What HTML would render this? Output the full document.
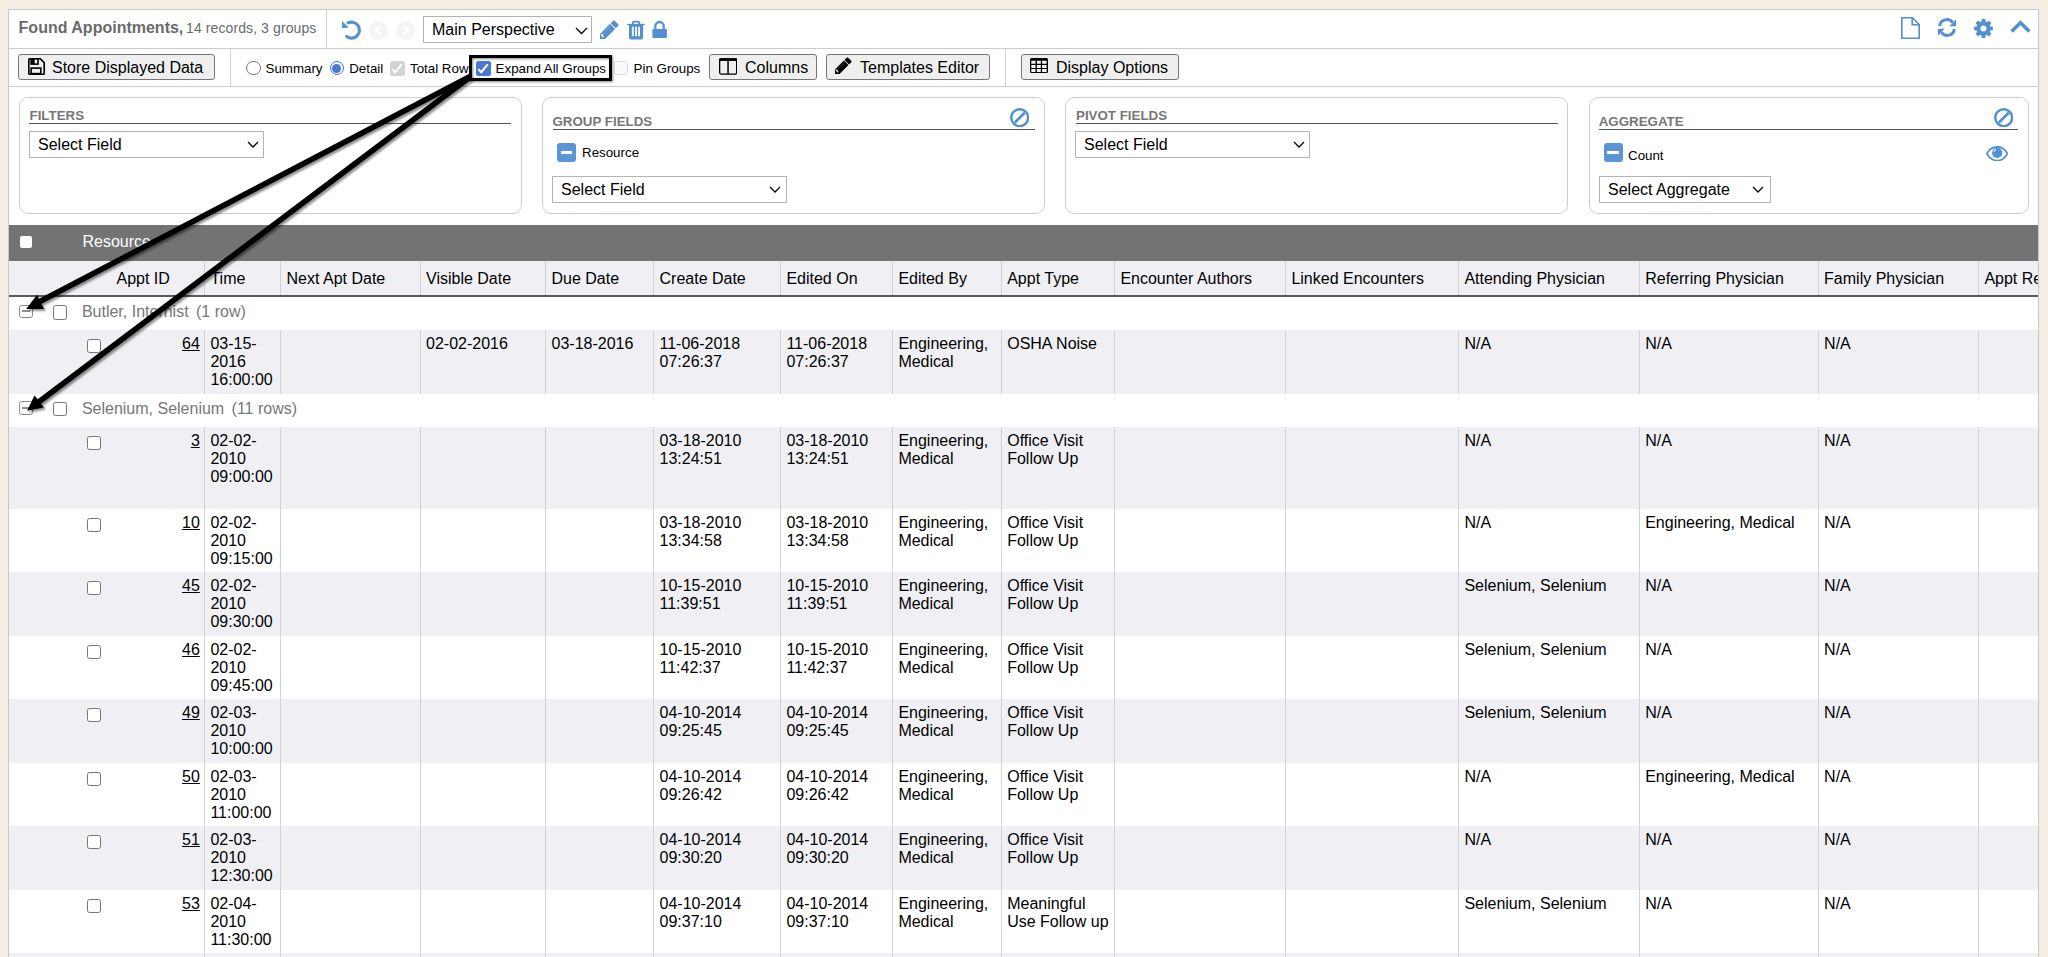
<!DOCTYPE html><html><head><meta charset="utf-8"><style>
*{box-sizing:border-box;margin:0;padding:0}
html,body{width:2048px;height:957px;overflow:hidden;background:#f4ede1;font-family:"Liberation Sans",sans-serif;color:#000}
.a{position:absolute}
.wrap{position:absolute;left:8px;top:9px;width:2031px;height:960px;background:#fff;border:1px solid #c8c8c8}
.hl{position:absolute;height:1px;background:#cfcfcf}
.vl{position:absolute;width:1px;background:#d2d2d2}
.t16{font-size:16px;line-height:18px;white-space:nowrap}
.t13{font-size:13.333px;line-height:15px;white-space:nowrap}
.btn{position:absolute;height:26px;background:#efefef;border:1px solid #767676;border-radius:3px}
.btn span{position:absolute;font-size:16px;line-height:18px;top:4px;white-space:nowrap}
.btn svg{position:absolute}
.sel{position:absolute;background:#fff;border:1px solid #b4b4b4}
.sel span{position:absolute;left:8px;font-size:16px;line-height:18px;white-space:nowrap}
.sel svg{position:absolute}
.panel{position:absolute;top:97px;height:117px;border:1px solid #cdcdcd;border-radius:9px;background:#fff}
.ptitle{position:absolute;font-weight:bold;font-size:13.333px;line-height:15px;color:#777;white-space:nowrap}
.pline{position:absolute;height:1px;background:#555}
.cb{position:absolute;width:13.5px;height:13.5px;border:1px solid #777;border-radius:2.5px;background:#fff}
.row{position:absolute;left:9px;width:2029px}
.cell{position:absolute;font-size:16px;line-height:18px;white-space:nowrap}
</style></head><body><div class="wrap"></div><div class="a" style="left:18.6px;top:18.5px;font-size:16px;line-height:18px;color:#6a6a6a;white-space:nowrap"><b>Found Appointments,</b></div><div class="a" style="left:186px;top:20px;font-size:14px;line-height:16px;color:#6a6a6a;letter-spacing:0.1px;white-space:nowrap">14 records, 3 groups</div><div class="vl" style="left:326px;top:10px;height:38px;background:#d0d0d0"></div><div class="hl" style="left:9px;top:48px;width:2029px;background:#cccccc"></div><svg class="a" style="left:341px;top:20px" width="21" height="21" viewBox="0 0 21 21"><path d="M5.91 3.55 A8 8 0 1 1 4.65 15.56" fill="none" stroke="#5290d2" stroke-width="3.1"/><path d="M1.0 0.9 L1.0 8.1 L7.9 7.7 Z" fill="#5290d2"/></svg><div class="a" style="left:368.8px;top:20.5px;width:19px;height:19px;border-radius:50%;background:#f5f5f5"></div><svg class="a" style="left:368.8px;top:20.5px" width="19" height="19" viewBox="0 0 19 19"><path d="M11.7 5 L7.2 9.5 L11.7 14" fill="none" stroke="#fff" stroke-width="2.6"/></svg><div class="a" style="left:395.7px;top:20.5px;width:19px;height:19px;border-radius:50%;background:#f5f5f5"></div><svg class="a" style="left:395.7px;top:20.5px" width="19" height="19" viewBox="0 0 19 19"><path d="M7.3 5 L11.8 9.5 L7.3 14" fill="none" stroke="#fff" stroke-width="2.6"/></svg><div class="sel" style="left:423px;top:16px;width:169px;height:27px"><span style="top:4px">Main Perspective</span></div><svg class="a" style="left:575px;top:27px" width="13" height="7.5" viewBox="-1 -1 13 7.5"><path d="M0 0 L5.5 5.5 L11 0" fill="none" stroke="#000" stroke-width="1.25"/></svg><svg class="a" style="left:600.2px;top:39.3px;overflow:visible" width="1" height="1" viewBox="0 0 1 1"><g transform="scale(1) rotate(-45)"><path d="M0 0 L3.6 -3.6 L17.8 -3.6 L17.8 3.6 L3.6 3.6 Z" fill="#5290d2"/><path d="M18.7 -3.6 H22.2 Q23.4 -3.6 23.4 -2.4 V2.4 Q23.4 3.6 22.2 3.6 H18.7 Z" fill="#5290d2"/><path d="M7.5 -1.8 H16.8" stroke="#fff" stroke-width="0.55" stroke-dasharray="0.9 0.5" opacity="0.8"/><path d="M3.2 -2.3 L5.4 -2.3 L5.4 -0.6 L4.6 -0.6 L4.6 1.3 L3.2 1.3 Z" fill="#fff"/></g></svg><svg class="a" style="left:627px;top:20px" width="18" height="20" viewBox="0 0 18 20"><path d="M0.1 3.8 H17.7 V5.1 H0.1 Z" fill="#5290d2"/><path d="M5 4 V2.6 Q5 0.7 6.9 0.7 H11.1 Q13 0.7 13 2.6 V4 H11.2 V2.5 H6.8 V4 Z" fill="#5290d2"/><path d="M2 4.5 H16.1 V17.5 Q16.1 19.5 14.1 19.5 H4 Q2 19.5 2 17.5 Z" fill="#5290d2"/><path d="M4.9 6.7 H6.7 V16.2 H4.9 Z M8.1 6.7 H9.9 V16.2 H8.1 Z M11.1 6.7 H12.9 V16.2 H11.1 Z" fill="#fff"/></svg><svg class="a" style="left:652px;top:20px" width="15" height="18.5" viewBox="0 0 15 18.5"><path d="M3.3 10 V6.2 A4.2 4.2 0 0 1 11.7 6.2 V10" fill="none" stroke="#5290d2" stroke-width="2.3"/><rect x="0.4" y="9.1" width="14.5" height="8.8" rx="0.9" fill="#5290d2"/></svg><svg class="a" style="left:1901px;top:17px" width="19" height="22" viewBox="0 0 19 22"><path d="M0.8 0.8 H11.5 L18.2 7.5 V21.2 H0.8 Z" fill="none" stroke="#5290d2" stroke-width="1.6"/><path d="M11.2 0.8 V7.8 H18.2" fill="none" stroke="#5290d2" stroke-width="1.6"/></svg><svg class="a" style="left:1937px;top:18px" width="20" height="19" viewBox="0 0 20 19"><path d="M2.6 8 A7.2 7.2 0 0 1 15.6 4.6" fill="none" stroke="#5290d2" stroke-width="3"/><path d="M19 1.5 V8.2 H12.3 Z" fill="#5290d2"/><path d="M17.4 11 A7.2 7.2 0 0 1 4.4 14.4" fill="none" stroke="#5290d2" stroke-width="3"/><path d="M1 17.5 V10.8 H7.7 Z" fill="#5290d2"/></svg><svg class="a" style="left:1974px;top:18.5px" width="19" height="19" viewBox="0 0 19 19"><path fill-rule="evenodd" d="M16.30 7.47 L18.92 7.63 L18.92 11.37 L16.30 11.53 L15.75 12.87 L17.48 14.83 L14.83 17.48 L12.87 15.75 L11.53 16.30 L11.37 18.92 L7.63 18.92 L7.47 16.30 L6.13 15.75 L4.17 17.48 L1.52 14.83 L3.25 12.87 L2.70 11.53 L0.08 11.37 L0.08 7.63 L2.70 7.47 L3.25 6.13 L1.52 4.17 L4.17 1.52 L6.13 3.25 L7.47 2.70 L7.63 0.08 L11.37 0.08 L11.53 2.70 L12.87 3.25 L14.83 1.52 L17.48 4.17 L15.75 6.13 Z M12.5 9.5 A3.0 3.0 0 1 0 6.5 9.5 A3.0 3.0 0 1 0 12.5 9.5 Z" fill="#5290d2"/></svg><svg class="a" style="left:2010px;top:20px" width="21" height="14" viewBox="0 0 21 14"><path d="M1.6 11.6 L10.5 2.7 L19.4 11.6" fill="none" stroke="#5290d2" stroke-width="3.6"/></svg><div class="hl" style="left:9px;top:86px;width:2029px;background:#cccccc"></div><div class="vl" style="left:230px;top:49px;height:37px;background:#d0d0d0"></div><div class="vl" style="left:1005px;top:49px;height:37px;background:#d0d0d0"></div><div class="btn" style="left:18px;top:54px;width:197px"><svg style="left:9px;top:3px" width="17" height="17" viewBox="0 0 17 17"><path d="M0.8 1.6 Q0.8 0.8 1.6 0.8 H12.3 L16.2 4.7 V15.4 Q16.2 16.2 15.4 16.2 H1.6 Q0.8 16.2 0.8 15.4 Z" fill="none" stroke="#000" stroke-width="1.6"/><rect x="2.3" y="0.8" width="8.5" height="6.1" fill="#000"/><rect x="6.7" y="1.6" width="2.5" height="3.7" fill="#fff"/><rect x="3.1" y="10.1" width="9.7" height="5.5" fill="none" stroke="#000" stroke-width="1.6"/></svg><span style="left:33px">Store Displayed Data</span></div><div class="a" style="left:246.1px;top:60.8px;width:14.5px;height:14.5px;border:1.2px solid #777;border-radius:50%;background:#fff"></div><div class="a t13" style="left:265.5px;top:60.5px">Summary</div><div class="a" style="left:329.7px;top:60.8px;width:14.3px;height:14.3px;border:1.4px solid #4a76d4;border-radius:50%;background:#fff"></div><div class="a" style="left:332.4px;top:63.5px;width:9px;height:9px;border-radius:50%;background:#4a76d4"></div><div class="a t13" style="left:349.2px;top:60.5px">Detail</div><div class="a" style="left:390px;top:61px;width:14.5px;height:14.5px;border-radius:2.5px;background:#d3d3d3"><svg class="a" style="left:0;top:0" width="14.5" height="14.5" viewBox="0 0 14.5 14.5"><path d="M2.3 8.2 L5.3 11.2 L11.7 3.4" fill="none" stroke="#fff" stroke-width="2.1"/></svg></div><div class="a t13" style="left:410px;top:60.5px">Total Row</div><div class="a" style="left:476px;top:61px;width:14.5px;height:14.5px;border-radius:2.5px;background:#4a76d4"><svg class="a" style="left:0;top:0" width="14.5" height="14.5" viewBox="0 0 14.5 14.5"><path d="M2.3 8.2 L5.3 11.2 L11.7 3.4" fill="none" stroke="#fff" stroke-width="2.1"/></svg></div><div class="a t13" style="left:495.6px;top:60.5px">Expand All Groups</div><div class="a" style="left:614px;top:61.3px;width:13.5px;height:13.8px;border:1px solid #dcdcdc;border-radius:2.5px;background:#fafafa"></div><div class="a t13" style="left:633.6px;top:60.5px">Pin Groups</div><div class="btn" style="left:709px;top:54px;width:108px"><svg style="left:8.5px;top:3px" width="18.5" height="17" viewBox="0 0 18.5 17"><rect x="0.65" y="0.9" width="17" height="15.2" rx="1.6" fill="none" stroke="#000" stroke-width="1.3"/><rect x="0" y="0.3" width="18.3" height="2.6" rx="1.2" fill="#000"/><rect x="8.3" y="1" width="1.5" height="15" fill="#000"/></svg><span style="left:35px">Columns</span></div><div class="btn" style="left:826px;top:54px;width:164px"><span style="left:33px">Templates Editor</span></div><svg class="a" style="left:834.9px;top:73.8px;overflow:visible" width="1" height="1" viewBox="0 0 1 1"><g transform="scale(0.89) rotate(-45)"><path d="M0 0 L3.6 -3.6 L17.8 -3.6 L17.8 3.6 L3.6 3.6 Z" fill="#000"/><path d="M18.7 -3.6 H22.2 Q23.4 -3.6 23.4 -2.4 V2.4 Q23.4 3.6 22.2 3.6 H18.7 Z" fill="#000"/><path d="M7.5 -1.8 H16.8" stroke="#efefef" stroke-width="0.55" stroke-dasharray="0.9 0.5" opacity="0.8"/><path d="M3.2 -2.3 L5.4 -2.3 L5.4 -0.6 L4.6 -0.6 L4.6 1.3 L3.2 1.3 Z" fill="#efefef"/></g></svg><div class="btn" style="left:1021px;top:54px;width:158px"><svg style="left:8px;top:3px" width="18" height="15" viewBox="0 0 18 15"><rect x="0" y="0" width="18" height="15" rx="1.5" fill="#000"/><path d="M1.3 2.7 H5.5 V5.7 H1.3 Z M6.9 2.7 H10.8 V5.7 H6.9 Z M12.1 2.7 H16.6 V5.7 H12.1 Z M1.3 6.9 H5.5 V9.9 H1.3 Z M6.9 6.9 H10.8 V9.9 H6.9 Z M12.1 6.9 H16.6 V9.9 H12.1 Z M1.3 11 H5.5 V14 H1.3 Z M6.9 11 H10.8 V14 H6.9 Z M12.1 11 H16.6 V14 H12.1 Z" fill="#f4f4f4"/></svg><span style="left:34px">Display Options</span></div><div class="a" style="left:469px;top:55px;width:143px;height:26px;border:3px solid #000;filter:drop-shadow(1.5px 1.5px 1.2px rgba(0,0,0,0.45))"></div><div class="panel" style="left:18.5px;width:503px"></div><div class="ptitle" style="left:29.5px;top:108px">FILTERS</div><div class="pline" style="left:29px;top:123px;width:482px"></div><div class="sel" style="left:29px;top:131px;width:235px;height:27px"><span style="top:3.6px">Select Field</span></div><svg class="a" style="left:247px;top:141px" width="12" height="7" viewBox="-1 -1 12 7"><path d="M0 0 L5.0 5 L10 0" fill="none" stroke="#000" stroke-width="1.25"/></svg><div class="panel" style="left:542px;width:503px"></div><div class="ptitle" style="left:552.5px;top:114px">GROUP FIELDS</div><div class="pline" style="left:552.5px;top:129px;width:482px"></div><svg class="a" style="left:1009.9px;top:107.89999999999999px" width="19.4" height="19.4" viewBox="0 0 19.4 19.4"><circle cx="9.7" cy="9.7" r="8.45" fill="none" stroke="#5290d2" stroke-width="2.5"/><path d="M14.7 4.699999999999999 L4.699999999999999 14.7" stroke="#5290d2" stroke-width="2.7"/></svg><div class="a" style="left:557px;top:143px;width:19px;height:19px;border-radius:3px;background:#5b95d6"><div class="a" style="left:3.6px;top:7.9px;width:11.8px;height:3px;background:#fff"></div></div><div class="a t13" style="left:582px;top:145px">Resource</div><div class="sel" style="left:552px;top:176px;width:235px;height:27px"><span style="top:3.6px">Select Field</span></div><svg class="a" style="left:769px;top:185.5px" width="12" height="7" viewBox="-1 -1 12 7"><path d="M0 0 L5.0 5 L10 0" fill="none" stroke="#000" stroke-width="1.25"/></svg><div class="panel" style="left:1065px;width:503px"></div><div class="ptitle" style="left:1076px;top:108px">PIVOT FIELDS</div><div class="pline" style="left:1076px;top:123px;width:481.5px"></div><div class="sel" style="left:1075px;top:131px;width:235px;height:27px"><span style="top:3.6px">Select Field</span></div><svg class="a" style="left:1293px;top:141px" width="12" height="7" viewBox="-1 -1 12 7"><path d="M0 0 L5.0 5 L10 0" fill="none" stroke="#000" stroke-width="1.25"/></svg><div class="panel" style="left:1588.5px;width:440px"></div><div class="ptitle" style="left:1598.7px;top:114px">AGGREGATE</div><div class="pline" style="left:1598.7px;top:129px;width:419px"></div><svg class="a" style="left:1993.6px;top:107.7px" width="19.4" height="19.4" viewBox="0 0 19.4 19.4"><circle cx="9.7" cy="9.7" r="8.45" fill="none" stroke="#5290d2" stroke-width="2.5"/><path d="M14.7 4.699999999999999 L4.699999999999999 14.7" stroke="#5290d2" stroke-width="2.7"/></svg><div class="a" style="left:1603.5px;top:143.3px;width:19px;height:19px;border-radius:3px;background:#5b95d6"><div class="a" style="left:3.6px;top:7.9px;width:11.8px;height:3px;background:#fff"></div></div><div class="a t13" style="left:1628px;top:148px">Count</div><svg class="a" style="left:1985.5px;top:145.5px" width="22.5" height="15.5" viewBox="0 0 22.5 15.5"><path d="M0.9 7.6 C4 2 8 0.8 11.2 0.8 C14.4 0.8 18.4 2 21.5 7.6 C18.4 13 14.4 14.6 11.2 14.6 C8 14.6 4 13 0.9 7.6 Z" fill="none" stroke="#5290d2" stroke-width="1.7"/><circle cx="11.2" cy="6.9" r="5.1" fill="#5290d2"/><path d="M8 5.6 A3.2 3.2 0 0 1 10.2 3.5" fill="none" stroke="#fff" stroke-width="1.1"/></svg><div class="sel" style="left:1599px;top:176px;width:172px;height:27px"><span style="top:3.6px">Select Aggregate</span></div><svg class="a" style="left:1752px;top:185.5px" width="12" height="7" viewBox="-1 -1 12 7"><path d="M0 0 L5.0 5 L10 0" fill="none" stroke="#000" stroke-width="1.25"/></svg><div class="a" style="left:0;top:0;width:2038px;height:957px;overflow:hidden"><div class="a" style="left:9px;top:224.5px;width:2029px;height:36px;background:#737373"></div><div class="a" style="left:19.5px;top:236px;width:12.5px;height:12.2px;border-radius:2px;background:#fff"></div><div class="a" style="left:82.5px;top:233px;font-size:16px;line-height:18px;color:#fff">Resource</div><div class="a" style="left:9px;top:260.5px;width:2029px;height:34.5px;background:#f0f0f4"></div><div class="a" style="left:9px;top:295px;width:2029px;height:2px;background:#5a5a5a"></div><div class="vl" style="left:203.9px;top:261px;height:34px"></div><div class="vl" style="left:280.0px;top:261px;height:34px"></div><div class="vl" style="left:419.5px;top:261px;height:34px"></div><div class="vl" style="left:545.0px;top:261px;height:34px"></div><div class="vl" style="left:653.0px;top:261px;height:34px"></div><div class="vl" style="left:779.9px;top:261px;height:34px"></div><div class="vl" style="left:891.9px;top:261px;height:34px"></div><div class="vl" style="left:1000.7px;top:261px;height:34px"></div><div class="vl" style="left:1113.9px;top:261px;height:34px"></div><div class="vl" style="left:1284.9px;top:261px;height:34px"></div><div class="vl" style="left:1457.9px;top:261px;height:34px"></div><div class="vl" style="left:1638.7px;top:261px;height:34px"></div><div class="vl" style="left:1817.6px;top:261px;height:34px"></div><div class="vl" style="left:1977.9px;top:261px;height:34px"></div><div class="a cell" style="left:116.5px;top:270px">Appt ID</div><div class="a cell" style="left:210.4px;top:270px">Time</div><div class="a cell" style="left:286.5px;top:270px">Next Apt Date</div><div class="a cell" style="left:426px;top:270px">Visible Date</div><div class="a cell" style="left:551.5px;top:270px">Due Date</div><div class="a cell" style="left:659.5px;top:270px">Create Date</div><div class="a cell" style="left:786.4px;top:270px">Edited On</div><div class="a cell" style="left:898.4px;top:270px">Edited By</div><div class="a cell" style="left:1007.2px;top:270px">Appt Type</div><div class="a cell" style="left:1120.4px;top:270px">Encounter Authors</div><div class="a cell" style="left:1291.4px;top:270px">Linked Encounters</div><div class="a cell" style="left:1464.4px;top:270px">Attending Physician</div><div class="a cell" style="left:1645.2px;top:270px">Referring Physician</div><div class="a cell" style="left:1824.1px;top:270px">Family Physician</div><div class="a cell" style="left:1984.4px;top:270px">Appt Re</div><div class="a" style="left:9px;top:297px;width:2029px;height:33px;background:#fff"></div><div class="a" style="left:19px;top:304.5px;width:13.8px;height:13.5px;border:1px solid #8a8a8a;border-radius:2.5px;background:#fff"><div class="a" style="left:1.5px;top:4.7px;width:8.8px;height:1.9px;background:#8f8f8f"></div></div><div class="cb" style="left:53.2px;top:305.1px;height:14.5px"></div><div class="a cell" style="left:81.9px;top:303px;color:#777">Butler, Internist<span style="margin-left:7.4px">(1 row)</span></div><div class="a" style="left:9px;top:330px;width:2029px;height:63.5px;background:#f0f0f4"></div><div class="vl" style="left:203.9px;top:330px;height:63.5px"></div><div class="vl" style="left:280.0px;top:330px;height:63.5px"></div><div class="vl" style="left:419.5px;top:330px;height:63.5px"></div><div class="vl" style="left:545.0px;top:330px;height:63.5px"></div><div class="vl" style="left:653.0px;top:330px;height:63.5px"></div><div class="vl" style="left:779.9px;top:330px;height:63.5px"></div><div class="vl" style="left:891.9px;top:330px;height:63.5px"></div><div class="vl" style="left:1000.7px;top:330px;height:63.5px"></div><div class="vl" style="left:1113.9px;top:330px;height:63.5px"></div><div class="vl" style="left:1284.9px;top:330px;height:63.5px"></div><div class="vl" style="left:1457.9px;top:330px;height:63.5px"></div><div class="vl" style="left:1638.7px;top:330px;height:63.5px"></div><div class="vl" style="left:1817.6px;top:330px;height:63.5px"></div><div class="vl" style="left:1977.9px;top:330px;height:63.5px"></div><div class="cb" style="left:87.3px;top:339px;height:14px"></div><div class="a cell" style="left:100px;width:99.8px;text-align:right;top:335px;text-decoration:underline">64</div><div class="a cell" style="left:210.4px;top:335px">03-15-<br>2016<br>16:00:00</div><div class="a cell" style="left:426px;top:335px">02-02-2016</div><div class="a cell" style="left:551.5px;top:335px">03-18-2016</div><div class="a cell" style="left:659.5px;top:335px">11-06-2018<br>07:26:37</div><div class="a cell" style="left:786.4px;top:335px">11-06-2018<br>07:26:37</div><div class="a cell" style="left:898.4px;top:335px">Engineering,<br>Medical</div><div class="a cell" style="left:1007.2px;top:335px">OSHA Noise</div><div class="a cell" style="left:1464.4px;top:335px">N/A</div><div class="a cell" style="left:1645.2px;top:335px">N/A</div><div class="a cell" style="left:1824.1px;top:335px">N/A</div><div class="a" style="left:9px;top:393.5px;width:2029px;height:33.5px;background:#fff"></div><div class="a" style="left:19px;top:401.0px;width:13.8px;height:13.5px;border:1px solid #8a8a8a;border-radius:2.5px;background:#fff"><div class="a" style="left:1.5px;top:4.7px;width:8.8px;height:1.9px;background:#8f8f8f"></div></div><div class="cb" style="left:53.2px;top:401.6px;height:14.5px"></div><div class="a cell" style="left:81.9px;top:399.5px;color:#777">Selenium, Selenium<span style="margin-left:7.4px">(11 rows)</span></div><div class="a" style="left:9px;top:427px;width:2029px;height:81.5px;background:#f0f0f4"></div><div class="vl" style="left:203.9px;top:427px;height:81.5px"></div><div class="vl" style="left:280.0px;top:427px;height:81.5px"></div><div class="vl" style="left:419.5px;top:427px;height:81.5px"></div><div class="vl" style="left:545.0px;top:427px;height:81.5px"></div><div class="vl" style="left:653.0px;top:427px;height:81.5px"></div><div class="vl" style="left:779.9px;top:427px;height:81.5px"></div><div class="vl" style="left:891.9px;top:427px;height:81.5px"></div><div class="vl" style="left:1000.7px;top:427px;height:81.5px"></div><div class="vl" style="left:1113.9px;top:427px;height:81.5px"></div><div class="vl" style="left:1284.9px;top:427px;height:81.5px"></div><div class="vl" style="left:1457.9px;top:427px;height:81.5px"></div><div class="vl" style="left:1638.7px;top:427px;height:81.5px"></div><div class="vl" style="left:1817.6px;top:427px;height:81.5px"></div><div class="vl" style="left:1977.9px;top:427px;height:81.5px"></div><div class="cb" style="left:87.3px;top:436px;height:14px"></div><div class="a cell" style="left:100px;width:99.8px;text-align:right;top:432px;text-decoration:underline">3</div><div class="a cell" style="left:210.4px;top:432px">02-02-<br>2010<br>09:00:00</div><div class="a cell" style="left:659.5px;top:432px">03-18-2010<br>13:24:51</div><div class="a cell" style="left:786.4px;top:432px">03-18-2010<br>13:24:51</div><div class="a cell" style="left:898.4px;top:432px">Engineering,<br>Medical</div><div class="a cell" style="left:1007.2px;top:432px">Office Visit<br>Follow Up</div><div class="a cell" style="left:1464.4px;top:432px">N/A</div><div class="a cell" style="left:1645.2px;top:432px">N/A</div><div class="a cell" style="left:1824.1px;top:432px">N/A</div><div class="a" style="left:9px;top:508.5px;width:2029px;height:63.5px;background:#fff"></div><div class="vl" style="left:203.9px;top:508.5px;height:63.5px"></div><div class="vl" style="left:280.0px;top:508.5px;height:63.5px"></div><div class="vl" style="left:419.5px;top:508.5px;height:63.5px"></div><div class="vl" style="left:545.0px;top:508.5px;height:63.5px"></div><div class="vl" style="left:653.0px;top:508.5px;height:63.5px"></div><div class="vl" style="left:779.9px;top:508.5px;height:63.5px"></div><div class="vl" style="left:891.9px;top:508.5px;height:63.5px"></div><div class="vl" style="left:1000.7px;top:508.5px;height:63.5px"></div><div class="vl" style="left:1113.9px;top:508.5px;height:63.5px"></div><div class="vl" style="left:1284.9px;top:508.5px;height:63.5px"></div><div class="vl" style="left:1457.9px;top:508.5px;height:63.5px"></div><div class="vl" style="left:1638.7px;top:508.5px;height:63.5px"></div><div class="vl" style="left:1817.6px;top:508.5px;height:63.5px"></div><div class="vl" style="left:1977.9px;top:508.5px;height:63.5px"></div><div class="cb" style="left:87.3px;top:517.5px;height:14px"></div><div class="a cell" style="left:100px;width:99.8px;text-align:right;top:513.5px;text-decoration:underline">10</div><div class="a cell" style="left:210.4px;top:513.5px">02-02-<br>2010<br>09:15:00</div><div class="a cell" style="left:659.5px;top:513.5px">03-18-2010<br>13:34:58</div><div class="a cell" style="left:786.4px;top:513.5px">03-18-2010<br>13:34:58</div><div class="a cell" style="left:898.4px;top:513.5px">Engineering,<br>Medical</div><div class="a cell" style="left:1007.2px;top:513.5px">Office Visit<br>Follow Up</div><div class="a cell" style="left:1464.4px;top:513.5px">N/A</div><div class="a cell" style="left:1645.2px;top:513.5px">Engineering, Medical</div><div class="a cell" style="left:1824.1px;top:513.5px">N/A</div><div class="a" style="left:9px;top:572.0px;width:2029px;height:63.5px;background:#f0f0f4"></div><div class="vl" style="left:203.9px;top:572.0px;height:63.5px"></div><div class="vl" style="left:280.0px;top:572.0px;height:63.5px"></div><div class="vl" style="left:419.5px;top:572.0px;height:63.5px"></div><div class="vl" style="left:545.0px;top:572.0px;height:63.5px"></div><div class="vl" style="left:653.0px;top:572.0px;height:63.5px"></div><div class="vl" style="left:779.9px;top:572.0px;height:63.5px"></div><div class="vl" style="left:891.9px;top:572.0px;height:63.5px"></div><div class="vl" style="left:1000.7px;top:572.0px;height:63.5px"></div><div class="vl" style="left:1113.9px;top:572.0px;height:63.5px"></div><div class="vl" style="left:1284.9px;top:572.0px;height:63.5px"></div><div class="vl" style="left:1457.9px;top:572.0px;height:63.5px"></div><div class="vl" style="left:1638.7px;top:572.0px;height:63.5px"></div><div class="vl" style="left:1817.6px;top:572.0px;height:63.5px"></div><div class="vl" style="left:1977.9px;top:572.0px;height:63.5px"></div><div class="cb" style="left:87.3px;top:581.0px;height:14px"></div><div class="a cell" style="left:100px;width:99.8px;text-align:right;top:577.0px;text-decoration:underline">45</div><div class="a cell" style="left:210.4px;top:577.0px">02-02-<br>2010<br>09:30:00</div><div class="a cell" style="left:659.5px;top:577.0px">10-15-2010<br>11:39:51</div><div class="a cell" style="left:786.4px;top:577.0px">10-15-2010<br>11:39:51</div><div class="a cell" style="left:898.4px;top:577.0px">Engineering,<br>Medical</div><div class="a cell" style="left:1007.2px;top:577.0px">Office Visit<br>Follow Up</div><div class="a cell" style="left:1464.4px;top:577.0px">Selenium, Selenium</div><div class="a cell" style="left:1645.2px;top:577.0px">N/A</div><div class="a cell" style="left:1824.1px;top:577.0px">N/A</div><div class="a" style="left:9px;top:635.5px;width:2029px;height:63.5px;background:#fff"></div><div class="vl" style="left:203.9px;top:635.5px;height:63.5px"></div><div class="vl" style="left:280.0px;top:635.5px;height:63.5px"></div><div class="vl" style="left:419.5px;top:635.5px;height:63.5px"></div><div class="vl" style="left:545.0px;top:635.5px;height:63.5px"></div><div class="vl" style="left:653.0px;top:635.5px;height:63.5px"></div><div class="vl" style="left:779.9px;top:635.5px;height:63.5px"></div><div class="vl" style="left:891.9px;top:635.5px;height:63.5px"></div><div class="vl" style="left:1000.7px;top:635.5px;height:63.5px"></div><div class="vl" style="left:1113.9px;top:635.5px;height:63.5px"></div><div class="vl" style="left:1284.9px;top:635.5px;height:63.5px"></div><div class="vl" style="left:1457.9px;top:635.5px;height:63.5px"></div><div class="vl" style="left:1638.7px;top:635.5px;height:63.5px"></div><div class="vl" style="left:1817.6px;top:635.5px;height:63.5px"></div><div class="vl" style="left:1977.9px;top:635.5px;height:63.5px"></div><div class="cb" style="left:87.3px;top:644.5px;height:14px"></div><div class="a cell" style="left:100px;width:99.8px;text-align:right;top:640.5px;text-decoration:underline">46</div><div class="a cell" style="left:210.4px;top:640.5px">02-02-<br>2010<br>09:45:00</div><div class="a cell" style="left:659.5px;top:640.5px">10-15-2010<br>11:42:37</div><div class="a cell" style="left:786.4px;top:640.5px">10-15-2010<br>11:42:37</div><div class="a cell" style="left:898.4px;top:640.5px">Engineering,<br>Medical</div><div class="a cell" style="left:1007.2px;top:640.5px">Office Visit<br>Follow Up</div><div class="a cell" style="left:1464.4px;top:640.5px">Selenium, Selenium</div><div class="a cell" style="left:1645.2px;top:640.5px">N/A</div><div class="a cell" style="left:1824.1px;top:640.5px">N/A</div><div class="a" style="left:9px;top:699.0px;width:2029px;height:63.5px;background:#f0f0f4"></div><div class="vl" style="left:203.9px;top:699.0px;height:63.5px"></div><div class="vl" style="left:280.0px;top:699.0px;height:63.5px"></div><div class="vl" style="left:419.5px;top:699.0px;height:63.5px"></div><div class="vl" style="left:545.0px;top:699.0px;height:63.5px"></div><div class="vl" style="left:653.0px;top:699.0px;height:63.5px"></div><div class="vl" style="left:779.9px;top:699.0px;height:63.5px"></div><div class="vl" style="left:891.9px;top:699.0px;height:63.5px"></div><div class="vl" style="left:1000.7px;top:699.0px;height:63.5px"></div><div class="vl" style="left:1113.9px;top:699.0px;height:63.5px"></div><div class="vl" style="left:1284.9px;top:699.0px;height:63.5px"></div><div class="vl" style="left:1457.9px;top:699.0px;height:63.5px"></div><div class="vl" style="left:1638.7px;top:699.0px;height:63.5px"></div><div class="vl" style="left:1817.6px;top:699.0px;height:63.5px"></div><div class="vl" style="left:1977.9px;top:699.0px;height:63.5px"></div><div class="cb" style="left:87.3px;top:708.0px;height:14px"></div><div class="a cell" style="left:100px;width:99.8px;text-align:right;top:704.0px;text-decoration:underline">49</div><div class="a cell" style="left:210.4px;top:704.0px">02-03-<br>2010<br>10:00:00</div><div class="a cell" style="left:659.5px;top:704.0px">04-10-2014<br>09:25:45</div><div class="a cell" style="left:786.4px;top:704.0px">04-10-2014<br>09:25:45</div><div class="a cell" style="left:898.4px;top:704.0px">Engineering,<br>Medical</div><div class="a cell" style="left:1007.2px;top:704.0px">Office Visit<br>Follow Up</div><div class="a cell" style="left:1464.4px;top:704.0px">Selenium, Selenium</div><div class="a cell" style="left:1645.2px;top:704.0px">N/A</div><div class="a cell" style="left:1824.1px;top:704.0px">N/A</div><div class="a" style="left:9px;top:762.5px;width:2029px;height:63.5px;background:#fff"></div><div class="vl" style="left:203.9px;top:762.5px;height:63.5px"></div><div class="vl" style="left:280.0px;top:762.5px;height:63.5px"></div><div class="vl" style="left:419.5px;top:762.5px;height:63.5px"></div><div class="vl" style="left:545.0px;top:762.5px;height:63.5px"></div><div class="vl" style="left:653.0px;top:762.5px;height:63.5px"></div><div class="vl" style="left:779.9px;top:762.5px;height:63.5px"></div><div class="vl" style="left:891.9px;top:762.5px;height:63.5px"></div><div class="vl" style="left:1000.7px;top:762.5px;height:63.5px"></div><div class="vl" style="left:1113.9px;top:762.5px;height:63.5px"></div><div class="vl" style="left:1284.9px;top:762.5px;height:63.5px"></div><div class="vl" style="left:1457.9px;top:762.5px;height:63.5px"></div><div class="vl" style="left:1638.7px;top:762.5px;height:63.5px"></div><div class="vl" style="left:1817.6px;top:762.5px;height:63.5px"></div><div class="vl" style="left:1977.9px;top:762.5px;height:63.5px"></div><div class="cb" style="left:87.3px;top:771.5px;height:14px"></div><div class="a cell" style="left:100px;width:99.8px;text-align:right;top:767.5px;text-decoration:underline">50</div><div class="a cell" style="left:210.4px;top:767.5px">02-03-<br>2010<br>11:00:00</div><div class="a cell" style="left:659.5px;top:767.5px">04-10-2014<br>09:26:42</div><div class="a cell" style="left:786.4px;top:767.5px">04-10-2014<br>09:26:42</div><div class="a cell" style="left:898.4px;top:767.5px">Engineering,<br>Medical</div><div class="a cell" style="left:1007.2px;top:767.5px">Office Visit<br>Follow Up</div><div class="a cell" style="left:1464.4px;top:767.5px">N/A</div><div class="a cell" style="left:1645.2px;top:767.5px">Engineering, Medical</div><div class="a cell" style="left:1824.1px;top:767.5px">N/A</div><div class="a" style="left:9px;top:826.0px;width:2029px;height:63.5px;background:#f0f0f4"></div><div class="vl" style="left:203.9px;top:826.0px;height:63.5px"></div><div class="vl" style="left:280.0px;top:826.0px;height:63.5px"></div><div class="vl" style="left:419.5px;top:826.0px;height:63.5px"></div><div class="vl" style="left:545.0px;top:826.0px;height:63.5px"></div><div class="vl" style="left:653.0px;top:826.0px;height:63.5px"></div><div class="vl" style="left:779.9px;top:826.0px;height:63.5px"></div><div class="vl" style="left:891.9px;top:826.0px;height:63.5px"></div><div class="vl" style="left:1000.7px;top:826.0px;height:63.5px"></div><div class="vl" style="left:1113.9px;top:826.0px;height:63.5px"></div><div class="vl" style="left:1284.9px;top:826.0px;height:63.5px"></div><div class="vl" style="left:1457.9px;top:826.0px;height:63.5px"></div><div class="vl" style="left:1638.7px;top:826.0px;height:63.5px"></div><div class="vl" style="left:1817.6px;top:826.0px;height:63.5px"></div><div class="vl" style="left:1977.9px;top:826.0px;height:63.5px"></div><div class="cb" style="left:87.3px;top:835.0px;height:14px"></div><div class="a cell" style="left:100px;width:99.8px;text-align:right;top:831.0px;text-decoration:underline">51</div><div class="a cell" style="left:210.4px;top:831.0px">02-03-<br>2010<br>12:30:00</div><div class="a cell" style="left:659.5px;top:831.0px">04-10-2014<br>09:30:20</div><div class="a cell" style="left:786.4px;top:831.0px">04-10-2014<br>09:30:20</div><div class="a cell" style="left:898.4px;top:831.0px">Engineering,<br>Medical</div><div class="a cell" style="left:1007.2px;top:831.0px">Office Visit<br>Follow Up</div><div class="a cell" style="left:1464.4px;top:831.0px">N/A</div><div class="a cell" style="left:1645.2px;top:831.0px">N/A</div><div class="a cell" style="left:1824.1px;top:831.0px">N/A</div><div class="a" style="left:9px;top:889.5px;width:2029px;height:63.5px;background:#fff"></div><div class="vl" style="left:203.9px;top:889.5px;height:63.5px"></div><div class="vl" style="left:280.0px;top:889.5px;height:63.5px"></div><div class="vl" style="left:419.5px;top:889.5px;height:63.5px"></div><div class="vl" style="left:545.0px;top:889.5px;height:63.5px"></div><div class="vl" style="left:653.0px;top:889.5px;height:63.5px"></div><div class="vl" style="left:779.9px;top:889.5px;height:63.5px"></div><div class="vl" style="left:891.9px;top:889.5px;height:63.5px"></div><div class="vl" style="left:1000.7px;top:889.5px;height:63.5px"></div><div class="vl" style="left:1113.9px;top:889.5px;height:63.5px"></div><div class="vl" style="left:1284.9px;top:889.5px;height:63.5px"></div><div class="vl" style="left:1457.9px;top:889.5px;height:63.5px"></div><div class="vl" style="left:1638.7px;top:889.5px;height:63.5px"></div><div class="vl" style="left:1817.6px;top:889.5px;height:63.5px"></div><div class="vl" style="left:1977.9px;top:889.5px;height:63.5px"></div><div class="cb" style="left:87.3px;top:898.5px;height:14px"></div><div class="a cell" style="left:100px;width:99.8px;text-align:right;top:894.5px;text-decoration:underline">53</div><div class="a cell" style="left:210.4px;top:894.5px">02-04-<br>2010<br>11:30:00</div><div class="a cell" style="left:659.5px;top:894.5px">04-10-2014<br>09:37:10</div><div class="a cell" style="left:786.4px;top:894.5px">04-10-2014<br>09:37:10</div><div class="a cell" style="left:898.4px;top:894.5px">Engineering,<br>Medical</div><div class="a cell" style="left:1007.2px;top:894.5px">Meaningful<br>Use Follow up</div><div class="a cell" style="left:1464.4px;top:894.5px">Selenium, Selenium</div><div class="a cell" style="left:1645.2px;top:894.5px">N/A</div><div class="a cell" style="left:1824.1px;top:894.5px">N/A</div><div class="a" style="left:9px;top:953.0px;width:2029px;height:63.5px;background:#f0f0f4"></div><div class="vl" style="left:203.9px;top:953.0px;height:63.5px"></div><div class="vl" style="left:280.0px;top:953.0px;height:63.5px"></div><div class="vl" style="left:419.5px;top:953.0px;height:63.5px"></div><div class="vl" style="left:545.0px;top:953.0px;height:63.5px"></div><div class="vl" style="left:653.0px;top:953.0px;height:63.5px"></div><div class="vl" style="left:779.9px;top:953.0px;height:63.5px"></div><div class="vl" style="left:891.9px;top:953.0px;height:63.5px"></div><div class="vl" style="left:1000.7px;top:953.0px;height:63.5px"></div><div class="vl" style="left:1113.9px;top:953.0px;height:63.5px"></div><div class="vl" style="left:1284.9px;top:953.0px;height:63.5px"></div><div class="vl" style="left:1457.9px;top:953.0px;height:63.5px"></div><div class="vl" style="left:1638.7px;top:953.0px;height:63.5px"></div><div class="vl" style="left:1817.6px;top:953.0px;height:63.5px"></div><div class="vl" style="left:1977.9px;top:953.0px;height:63.5px"></div></div><svg class="a" style="left:0;top:0" width="2048" height="957" viewBox="0 0 2048 957">
<defs><filter id="sh" x="-10%" y="-10%" width="120%" height="120%"><feGaussianBlur in="SourceAlpha" stdDeviation="1.2"/><feOffset dx="1.5" dy="1.5" result="b"/><feComponentTransfer><feFuncA type="linear" slope="0.45"/></feComponentTransfer><feMerge><feMergeNode/><feMergeNode in="SourceGraphic"/></feMerge></filter></defs>
<g filter="url(#sh)">
<path d="M470 76.5 L36 303.5" stroke="#000" stroke-width="5.6" fill="none"/>
<path d="M26.2 309 L37 294.7 L44 309 Z" fill="#000"/>
<path d="M470 77 L35 404.8" stroke="#000" stroke-width="5.6" fill="none"/>
<path d="M27 410.8 L34.5 395.4 L43.9 407.6 Z" fill="#000"/>
</g></svg></body></html>
